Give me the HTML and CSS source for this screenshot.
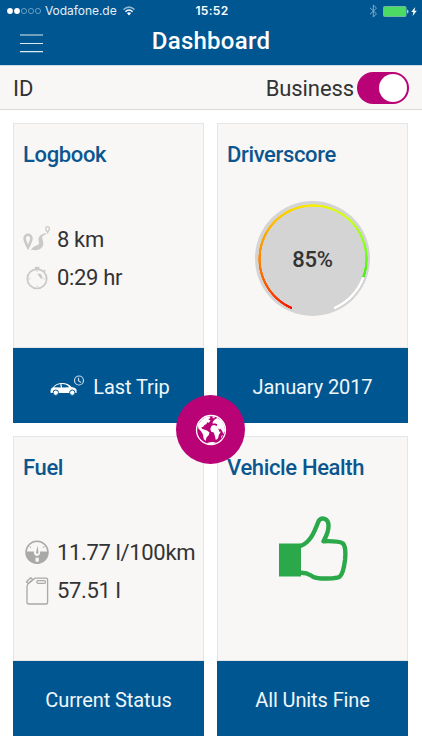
FILE: index.html
```html
<!DOCTYPE html>
<html lang="en">
<head>
<meta charset="utf-8">
<title>Dashboard</title>
<link rel="stylesheet" href="styles.css">
</head>
<body>
<header class="header">
  <div class="status">
    <div class="carrier">
      <svg width="35" height="8" viewBox="0 0 35 8"><g fill="#fff"><circle cx="3" cy="4" r="2.9"/><circle cx="10" cy="4" r="2.9"/></g><g fill="none" stroke="#8db6d4" stroke-width=".7"><circle cx="17" cy="4" r="2.6"/><circle cx="24" cy="4" r="2.6"/><circle cx="31" cy="4" r="2.6"/></g></svg>
      <span class="carrier-name">Vodafone.de</span>
      <svg class="wifi" width="12" height="10" viewBox="0 0 12 10"><g fill="none" stroke-width="1.5"><path stroke="#8db6d4" d="M.5 3.6Q6-1.4 11.5 3.6"/><path stroke="#fff" d="M2.4 5.7Q6 2.4 9.6 5.7"/></g><path fill="#fff" d="M3.9 7.1Q6 5.4 8.1 7.1L6 9.4z"/></svg>
    </div>
    <span class="time">15:52</span>
    <div class="power">
      <svg width="9" height="14" viewBox="0 0 9 14"><path d="M1 3.8l6.5 6L4.3 13V1l3.2 3.2L1 10.2" fill="none" stroke="#7fabca" stroke-width="1"/></svg>
      <svg class="battery" width="26" height="11" viewBox="0 0 26 11"><rect x=".5" y=".5" width="22.5" height="10" rx="1" fill="#4cd964" stroke="#72b7a0"/><path d="M24 3.5q1.5 0 1.5 2t-1.5 2z" fill="#a9cce0"/></svg>
      <svg width="6" height="9" viewBox="0 0 6 9"><path fill="#fff" d="M4.2 0L.2 5h2.2L1.6 9 5.8 3.7H3.5z"/></svg>
    </div>
  </div>
  <div class="titlebar">
    <svg class="menu" width="23" height="19" viewBox="0 0 23 19"><path d="M0 1h23M0 9.5h23M0 17.6h23" stroke="#dceaf3" stroke-width="1.2"/></svg>
    <h1>Dashboard</h1>
  </div>
</header>
<div class="idbar">
  <span class="id">ID</span>
  <span class="mode">Business</span>
  <span class="toggle"><span class="knob"></span></span>
</div>
<main class="grid">
  <section class="card">
    <div class="body">
      <h2>Logbook</h2>
      <div class="rows">
        <div class="row">
          <svg width="28" height="28" viewBox="0 0 28 28"><g fill="none" stroke="#c9c9c8"><path stroke-width="2.6" d="M5 22.5Q1.6 15.8 1.6 13.2A3.4 3.4 0 0 1 8.4 13.2Q8.4 15.8 5 22.5z"/><path stroke-width="1.3" d="M24.6 7.7Q22.8 4.8 22.8 3.4A1.8 1.8 0 0 1 26.4 3.4Q26.4 4.8 24.6 7.7z"/></g><path fill="#c9c9c8" d="M7.6 24.8Q10.5 21 14.2 20.2Q16.8 19 15.8 16.5C14.5 12 17.5 8.7 23 8.2V9.4C19.5 10.2 18.5 11.5 19.7 15C21.5 20 19.5 24.7 13 25.2Z"/></svg>
          <span>8 km</span>
        </div>
        <div class="row">
          <svg width="28" height="28" viewBox="0 0 28 28"><g fill="none" stroke="#c9c9c8"><circle cx="14" cy="14.8" r="9.7" stroke-width="1.7"/><path stroke-width="2.4" d="M12 4h4.4"/><path stroke-width="1.4" d="M20.8 6l1.5 1.5"/><path stroke-width=".8" d="M14 6v2M14 21.5v2M5.5 14.8h2M20.5 14.8h2"/></g><path fill="#c9c9c8" d="M14.4 10q1.6-1.2 3 0 2.4 1.5 2.1 4.2l-1.4.7z"/></svg>
          <span>0:29 hr</span>
        </div>
      </div>
    </div>
    <div class="foot">
      <svg class="car" width="35" height="24" viewBox="0 0 35 24"><path fill="#fff" d="M.5 18.5Q.2 14.3 3 13.2Q6.5 9 12 9Q18 8.8 21.5 13Q26 13.5 26.6 16V19H1Z"/><path fill="#005691" d="M3.8 13.3Q6.5 10.3 10.2 10.1L10.8 13.4ZM11.5 10Q16.5 9.8 19.2 13.2L12 13.4Z"/><g fill="#fff" stroke="#005691"><circle cx="5.8" cy="18.7" r="2.7"/><circle cx="22.3" cy="18.7" r="2.7"/></g><g fill="none" stroke="#c4d9e7" stroke-width="1.2"><circle cx="29" cy="6.5" r="4.5"/><path d="M28.5 3.8v3l2.5 1.8"/></g></svg>
      <span>Last Trip</span>
    </div>
  </section>
  <section class="card">
    <div class="body">
      <h2>Driverscore</h2>
      <div class="gauge"><div class="arc"></div><span class="percent">85%</span></div>
    </div>
    <div class="foot"><span>January 2017</span></div>
  </section>
  <section class="card">
    <div class="body">
      <h2>Fuel</h2>
      <div class="rows">
        <div class="row">
          <svg width="28" height="28" viewBox="0 0 28 28"><circle cx="14" cy="14.3" r="11" fill="#f8f7f6" stroke="#a9a9a8" stroke-width="1.5"/><path fill="#a9a9a8" d="M3 13.5H11Q10.2 17.2 14 18Q17.8 17.2 17 13.5H25.2Q25 24.8 14 25.5Q3 24.8 3 13.5Z"/><path fill="#a9a9a8" d="M14.7 7.5L13 14.7q1.2 2 2.4 0z"/><path stroke="#a9a9a8" d="M6.5 8.5l1.6 1.2M21.5 8.5l-1.6 1.2"/><path fill="#f8f7f6" d="M12.5 19.7h3.3v4h-3.3z"/></svg>
          <span>11.77 l/100km</span>
        </div>
        <div class="row">
          <svg width="28" height="28" viewBox="0 0 28 28"><g fill="none" stroke="#a9a9a8" stroke-width="1.3" stroke-linejoin="round"><path d="M4 10V25Q4 27 6 27H23Q24.6 27 24.6 25V3Q24.6 1.2 23 1.2H12L5.3 6.6Q4 7.8 4 10Z"/><path d="M3.4 4.8L7.7.8 9.8 2.6 5.4 6.4ZM15 3.6h6.3q1.2.2 1.2 1.4T21.3 6.3H14.8Q12.5 4.6 15 3.6Z"/></g></svg>
          <span>57.51 l</span>
        </div>
      </div>
    </div>
    <div class="foot"><span>Current Status</span></div>
  </section>
  <section class="card">
    <div class="body">
      <h2>Vehicle Health</h2>
      <svg class="thumb" width="72" height="66" viewBox="0 0 72 66"><path fill="#2ba84a" d="M1 27.5h22v33H1z"/><path fill="none" stroke="#2ba84a" stroke-width="4.4" stroke-linejoin="round" d="M22.5 30C32 26.5 36 17 40 6.5C42 .3 50 1.5 50.5 9C50.8 16 48.5 19.5 45.5 25.2C53 25 61 24.7 65 27.5C68 31 67.7 37 67 44C66 52 65 57.5 62 60.3C59 63 40 63.3 35.5 61C31 58.5 30 56.5 22.5 56.8"/></svg>
    </div>
    <div class="foot"><span>All Units Fine</span></div>
  </section>
  <div class="globe">
    <svg width="32" height="32" viewBox="0 0 32 32"><circle cx="16" cy="16" r="14.5" fill="none" stroke="#fff" stroke-width="1.3"/><path fill="#fff" d="M3 10.5L7 5.5L11 3L14.5 2.2L15.4 4L13.2 5.2L15.5 6.3L14 8.7L12 8.2L11.5 10L9.5 11L8 13L6.3 13.3L7.3 15L9 15.4L12 16.5L14.5 18.5L13.8 21L11.5 23.5L10.5 27L8.7 25L8 20.5L5.8 17L3.2 14.2ZM18 2.3L20 2.8L19 4.5L17.3 3.5ZM17.4 9.4L18 7.5L20.3 5L22.3 4L26.5 6.5L29.5 11.5L30 17L28.5 20L26.8 16.5L25 14.5L24.2 15.7L22.6 13.3L24.6 18L26 17.5L23.8 21L23 24.5L20.8 26L19.8 21.7L18.7 18.5L16.2 17.7L15.3 15L16.6 11.8L19 11L21.7 12L22.5 10.5L20.5 9.5ZM26.3 22L28 21L26 24.5ZM12 29Q17 27.4 21 28.5L18 30H14Z"/></svg>
  </div>
</main>
</body>
</html>
```
FILE: styles.css
```css
* { box-sizing: border-box; }
body {
  margin: 0;
  width: 422px;
  height: 750px;
  overflow: hidden;
  background: #fff;
  color: #333;
  font-family: Roboto, sans-serif;
}
svg { display: block; flex: none; }
h1, h2 { margin: 0; font-weight: 500; white-space: nowrap; }
.header { height: 65px; background: #005691; color: #fff; }
.status {
  height: 22px;
  padding: 0 5px 0 7px;
  display: grid;
  grid-template-columns: 1fr auto 1fr;
  align-items: center;
}
.carrier, .power { display: flex; align-items: center; }
.carrier-name { margin-left: 3px; font: 12px/22px Inter, sans-serif; letter-spacing: -.05px; color: #e4eff6; }
.wifi { margin-left: 6px; }
.time { font: 600 12px/22px Inter, sans-serif; letter-spacing: .3px; }
.power { justify-content: flex-end; }
.battery { margin: 0 2px 0 5px; }
.titlebar {
  height: 43px;
  padding: 0 20px;
  display: grid;
  grid-template-columns: 23px 1fr 23px;
}
.menu { margin-top: 12px; }
h1 { text-align: center; font-size: 24px; line-height: 38px; letter-spacing: .25px; }
.idbar {
  height: 45px;
  padding: 0 13px;
  display: flex;
  align-items: center;
  background: #f8f7f6;
  border-bottom: 1px solid #d9d9d9;
  border-top: 1px solid #c9dbe6;
  font-size: 22px;
}
.id, .mode { padding-top: 2px; letter-spacing: -.1px; }
.mode { margin-left: auto; margin-right: 3px; }
.toggle {
  width: 52px;
  height: 32px;
  padding: 2px;
  border-radius: 16px;
  background: #b90276;
  display: flex;
  justify-content: flex-end;
}
.knob { width: 28px; height: 28px; border-radius: 50%; background: #fff; }
.grid {
  position: relative;
  margin: 13px 14px 0 13px;
  display: grid;
  grid-template-columns: 191px 191px;
  grid-template-rows: 300px 300px;
  gap: 13px;
}
.card { display: flex; flex-direction: column; }
.body {
  height: 225px;
  padding-left: 10px;
  background: #f8f7f6;
  box-shadow: inset 0 0 0 1px #e6e6e6;
}
h2 { padding-top: 17px; font-size: 22px; line-height: 30px; letter-spacing: -.35px; color: #0c568f; }
.rows { padding-top: 50px; }
.row {
  height: 38.5px;
  display: flex;
  align-items: center;
  gap: 6px;
  font-size: 22px;
  letter-spacing: -.35px;
  white-space: nowrap;
}
.foot {
  height: 75px;
  background: #005691;
  color: #f0f7fb;
  display: flex;
  align-items: center;
  justify-content: center;
  font-size: 20px;
  letter-spacing: -.1px;
  padding-top: 2px;
}
.car { margin: 0 8px 1px 3px; }
.gauge {
  width: 115px;
  height: 115px;
  margin: 31px 0 0 28px;
  border-radius: 50%;
  background: #d4d4d4;
  display: grid;
  place-items: center;
}
.arc, .percent { grid-area: 1 / 1; }
.arc {
  width: 110px;
  height: 110px;
  border-radius: 50%;
  background: conic-gradient(from 203deg, #f01400 0, #ff4800 30deg, #ff9000 75deg, #ffc800 120deg, #f8ee00 157deg, #c8ff20 200deg, #80ff20 235deg, #40f010 267deg, #fff 267deg 314deg, transparent 314deg);
  -webkit-mask: radial-gradient(closest-side, transparent 52px, #000 52.6px, #000 54.4px, transparent 55px);
  mask: radial-gradient(closest-side, transparent 52px, #000 52.6px, #000 54.4px, transparent 55px);
}
.percent { font-size: 22px; font-weight: 500; letter-spacing: -.3px; padding-top: 2px; }
.thumb { margin: 33px 0 0 51px; }
.globe {
  position: absolute;
  left: 163px;
  top: 272px;
  width: 69px;
  height: 69px;
  border-radius: 50%;
  background: #b90276;
  display: grid;
  place-items: center;
}
```
